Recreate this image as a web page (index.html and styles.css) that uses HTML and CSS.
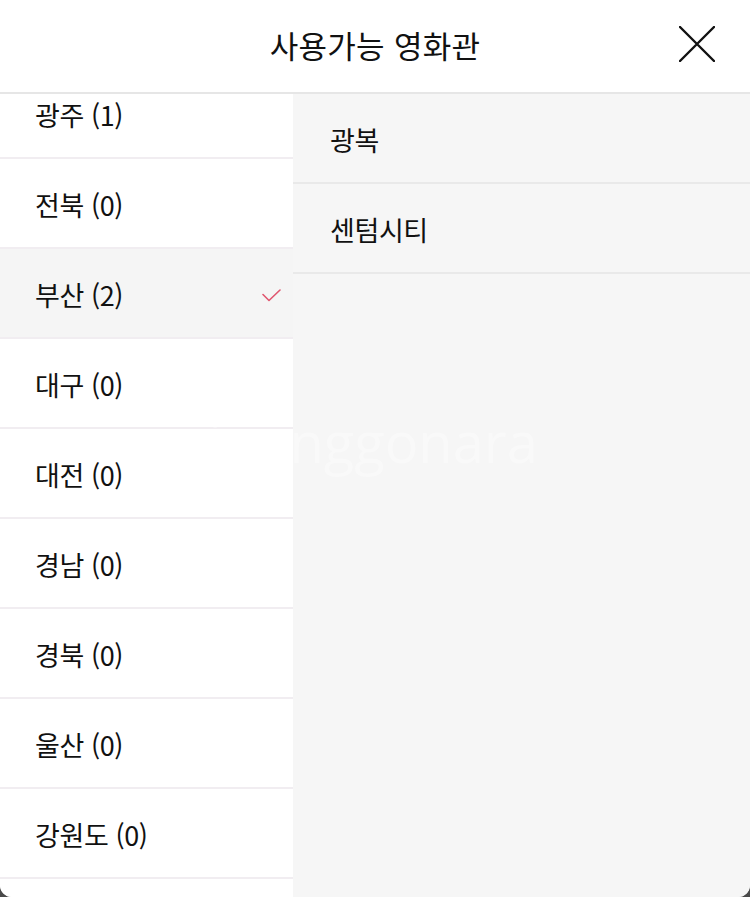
FILE: index.html
```html
<!DOCTYPE html>
<html lang="ko">
<head>
<meta charset="utf-8">
<title>사용가능 영화관</title>
<link rel="stylesheet" href="styles.css">
</head>
<body>
<div class="modal">
  <header class="head">
    <span class="head-side"></span>
    <h1 class="title">사용가능 영화관</h1>
    <button class="close" aria-label="닫기">
      <svg width="36" height="36" viewBox="0 0 36 36"><path d="M1 1 L35 35 M35 1 L1 35" stroke="#111" stroke-width="2.4" fill="none" stroke-linecap="round"/></svg>
    </button>
  </header>
  <div class="content">
    <div class="regions">
      <ul class="region-list">
        <li class="region">광주 (1)</li>
        <li class="region">전북 (0)</li>
        <li class="region selected">부산 (2)
          <svg class="check" width="19" height="13" viewBox="0 0 19 13"><path d="M1 5.5 L7 11.5 L18 1" stroke="#e0566f" stroke-width="1.6" fill="none" stroke-linecap="round" stroke-linejoin="round"/></svg>
        </li>
        <li class="region">대구 (0)</li>
        <li class="region">대전 (0)</li>
        <li class="region">경남 (0)</li>
        <li class="region">경북 (0)</li>
        <li class="region">울산 (0)</li>
        <li class="region">강원도 (0)</li>
        <li class="region"></li>
      </ul>
    </div>
    <div class="theaters">
      <ul class="theater-list">
        <li class="theater">광복</li>
        <li class="theater">센텀시티</li>
      </ul>
    </div>
    <div class="watermark">joonggonara</div>
  </div>
</div>
</body>
</html>
```

FILE: styles.css
```css
* { box-sizing: border-box; }
html, body { margin: 0; padding: 0; }
body {
  background: #4a4a4a;
  font-family: "Noto Sans CJK KR", "Noto Sans", sans-serif;
  color: #111;
}
.modal {
  width: 750px;
  height: 897px;
  background: #fff;
  border-radius: 0 0 12px 12px;
  overflow: hidden;
  display: flex;
  flex-direction: column;
}
.head {
  height: 94px;
  flex: none;
  border-bottom: 2px solid #e6e6e6;
  display: grid;
  grid-template-columns: 1fr auto 1fr;
  align-items: center;
}
.title {
  margin: 0;
  font-size: 31px;
  font-weight: 400;
  line-height: 1;
  padding-bottom: 4px;
  letter-spacing: 0.3px;
}
.close {
  justify-self: end;
  margin-right: 35px;
  padding: 0;
  border: 0;
  background: none;
  width: 36px;
  height: 36px;
  display: flex;
  margin-bottom: 4px;
}
.content {
  flex: 1;
  display: flex;
  position: relative;
  overflow: hidden;
}
.regions {
  width: 293px;
  flex: none;
  overflow: hidden;
  background: #fff;
}
.region-list {
  list-style: none;
  margin: -25px 0 0 0;
  padding: 0;
}
.region {
  height: 90px;
  border-bottom: 2px solid #f1edf1;
  display: flex;
  align-items: center;
  justify-content: space-between;
  padding: 2px 12px 0 35px;
  font-size: 27px;
  letter-spacing: -0.4px;
}
.region.selected { background: #f5f5f5; }
.check { margin-top: 2px; }
.theaters {
  flex: 1;
  background: #f6f6f6;
}
.theater-list {
  list-style: none;
  margin: 0;
  padding: 0;
}
.theater {
  height: 90px;
  border-bottom: 2px solid #e9e9e9;
  display: flex;
  align-items: center;
  padding: 2px 0 0 37px;
  font-size: 27px;
  letter-spacing: -0.4px;
}
.watermark {
  position: absolute;
  left: 208px;
  top: 319px;
  font-family: "Open Sans", sans-serif;
  font-size: 56px;
  line-height: 1;
  color: rgba(255, 255, 255, 0.35);
  pointer-events: none;
}
```
